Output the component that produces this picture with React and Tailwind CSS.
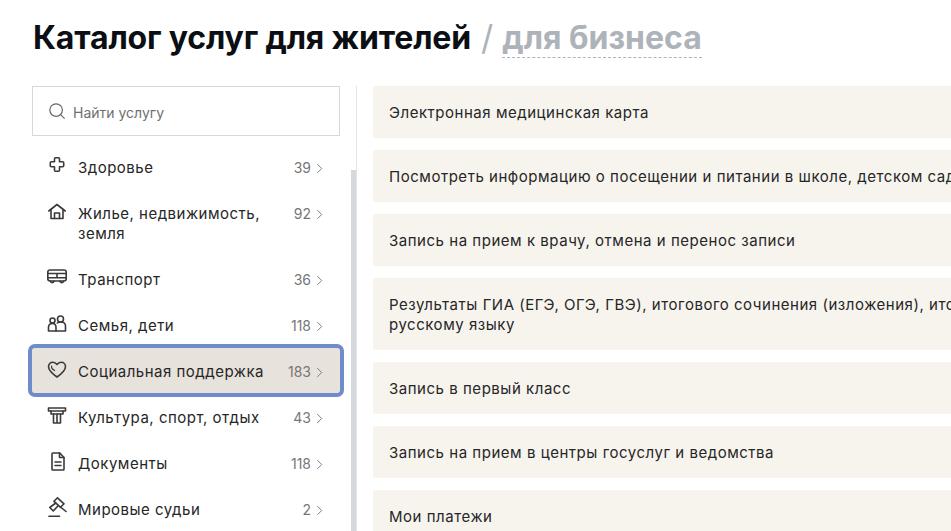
import React from "react";

const I = ({ children }) => (
  <svg viewBox="0 0 20 20" fill="none" stroke="#3a3a3a" strokeWidth="1.600" strokeLinecap="round" strokeLinejoin="round" className="w-5 h-5 shrink-0">
    {children}
  </svg>
);

const icons = {
  plus: <path d="M7.500 3.800q0-1 1-1h3q1 0 1 1v3h3.200q1 0 1 1v3q0 1-1 1h-3.200v3.400q0 1-1 1h-3q-1 0-1-1v-3.400H4.300q-1 0-1-1v-3q0-1 1-1h3.200z" />,
  home: (
    <>
      <path d="M1.800 10 10 3.500l8.200 6.500" />
      <path d="M4 8.500V17.500h12V8.500" />
      <path d="M7.500 17.500v-5.500h5v5.500" />
    </>
  ),
  bus: (
    <>
      <rect x="0.800" y="3" width="18.400" height="11" rx="2.200" />
      <path d="M.8 6.500h18.400M.8 10.800h18.400M10 6.500v4.300" />
      <path d="M3.500 14a1.700 1.700 0 0 0 3.400 0M13.100 14a1.700 1.700 0 0 0 3.400 0" />
    </>
  ),
  family: (
    <>
      <circle cx="5.500" cy="7.500" r="2.500" />
      <circle cx="13.500" cy="6" r="3" />
      <path d="M1.500 18v-3.500c0-2.300 1.700-4 4-4s3.500 1.700 3.500 4V18z" />
      <path d="M9 18h9.500v-5c0-2.500-2-4-5-4-1.300 0-2.400.3-3.200 1" />
    </>
  ),
  heart: (
    <>
      <path d="M10 18C5 14.500 1.500 11.500 1.500 7.500A4.300 4.300 0 0 1 5.800 3.200c1.800 0 3.200.8 4.200 2.300 1-1.500 2.400-2.300 4.200-2.300a4.300 4.300 0 0 1 4.300 4.300c0 4-3.500 7-8.500 10.500z" />
      <path d="M4.600 7c-.3 2 1 3.500 3 4.500" strokeWidth="1.200" />
    </>
  ),
  column: (
    <>
      <path d="M1.500 3h17M1.500 6h17M1.500 3v3M18.500 3v3" />
      <path d="M4 6v3h12V6" />
      <path d="M6.500 9v9h7V9M10 9v9" />
    </>
  ),
  doc: (
    <>
      <path d="M5 2.800q0-.8.800-.8h7l4.200 4.500v11.700q0 .8-.8.800H5.800q-.8 0-.8-.8z" />
      <path d="M12.500 2v4.500H17M8 11h6M8 14.500h6" />
    </>
  ),
  gavel: (
    <>
      <path d="m10.500.8 6.500 6-3.500 3.500-6.500-6z" />
      <path d="m8.800 6-6 4.500 3.500 3.500 5-5.500" />
      <path d="M14 10.500l5 4" />
      <path d="M2 19.300h10.500" />
    </>
  ),
};

const categories = [
  { name: "Здоровье", count: 39, icon: "plus" },
  { name: "Жилье, недвижимость, земля", count: 92, icon: "home" },
  { name: "Транспорт", count: 36, icon: "bus" },
  { name: "Семья, дети", count: 118, icon: "family" },
  { name: "Социальная поддержка", count: 183, icon: "heart", active: true },
  { name: "Культура, спорт, отдых", count: 43, icon: "column" },
  { name: "Документы", count: 118, icon: "doc" },
  { name: "Мировые судьи", count: 2, icon: "gavel" },
];

const services = [
  "Электронная медицинская карта",
  "Посмотреть информацию о посещении и питании в школе, детском саду",
  "Запись на прием к врачу, отмена и перенос записи",
  "Результаты ГИА (ЕГЭ, ОГЭ, ГВЭ), итогового сочинения (изложения), итогового собеседования по русскому языку",
  "Запись в первый класс",
  "Запись на прием в центры госуслуг и ведомства",
  "Мои платежи",
];

export default function App() {
  return (
    <div className="w-[951px] h-[531px] overflow-hidden bg-white font-['Inter',sans-serif] text-[#222]">
      <h1 className="pt-[18px] pl-[33px] h-[86px] text-[32px] leading-[40px] font-bold text-[#0b0f14] flex items-start whitespace-nowrap">
        <span className="tracking-[-0.16px]">Каталог услуг для жителей</span>
        <span className="ml-[10px] font-normal text-[34px] text-[#aeb3ba]">/</span>
        <span className="ml-[9px] text-[#aeb3ba] h-[40px] border-b border-dashed border-[#aeb3ba]">для бизнеса</span>
      </h1>
      <div className="flex items-start">
        <div className="ml-8 w-[308px] shrink-0">
          <div className="h-[50px] border border-[#d5d7da] flex items-center pl-[15px] gap-[7px]">
            <svg viewBox="0 0 20 20" fill="none" stroke="#6b6b6b" strokeWidth="1.400" className="w-[18px] h-[18px]">
              <circle cx="9" cy="9" r="7" />
              <path d="m14 14 4.500 4.500" />
            </svg>
            <span className="text-[14px] pt-[2px] text-[#6f6f6f]">Найти услугу</span>
          </div>
          <ul className="mt-[9px] text-[15px] leading-5 tracking-[0.5px]">
            {categories.map((c) => (
              <li
                key={c.name}
                className={
                  c.active
                    ? "flex items-start pl-[14px] pr-[17px] -mt-px mb-[2px] pt-[14px] pb-[11px] bg-[#e8e2dc] rounded-[3px] outline-4 outline-[#6f8bc9]"
                    : "flex items-start pl-[14px] pr-[17px] py-[13px]"
                }
              >
                <span className="-mt-[3px] mr-[11px] ml-px"><I>{icons[c.icon]}</I></span>
                <span className="flex-1 text-[#262626]">{c.name}</span>
                <span className="ml-[8px] flex items-center h-5 text-[14px] tracking-normal text-[#777] whitespace-nowrap">
                  {c.count}
                  <svg viewBox="0 0 8 12" fill="none" stroke="#777" strokeWidth="1.100" className="ml-[5px] w-[7px] h-[11px]">
                    <path d="m1.500 1 5 5-5 5" />
                  </svg>
                </span>
              </li>
            ))}
          </ul>
        </div>
        <div className="ml-[11px] w-[6px] h-[445px] shrink-0 border-r border-[#e4e4e4] pt-[84px]">
          <div className="h-full bg-[#d5d9de] w-[5px]" />
        </div>
        <div className="ml-4 flex flex-col gap-3 w-[830px] shrink-0">
          {services.map((s) => (
            <div key={s} className="bg-[#f7f4ee] rounded-[3px] px-4 pt-[17px] pb-[15px] text-[15px] leading-5 tracking-[0.53px] text-[#262626]">
              {s}
            </div>
          ))}
        </div>
      </div>
    </div>
  );
}
